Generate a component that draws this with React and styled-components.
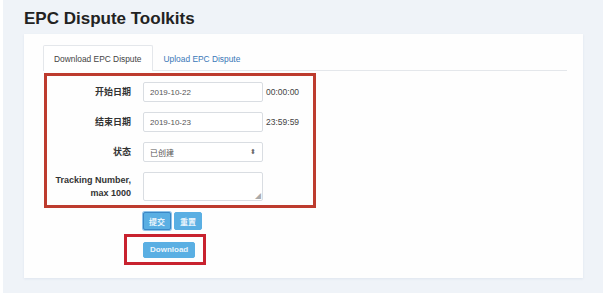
import React from 'react';
import styled, { createGlobalStyle } from 'styled-components';

const Global = createGlobalStyle`
    body {
        margin: 0;
        background: #ffffff;
        font-family: "Liberation Sans", "Noto Sans CJK SC", sans-serif;
    }
`;

const Panel = styled.div`
    margin-left: 3px;
    width: 600px;
    height: 293px;
    background: #eff3f8;
    padding-top: 9px;
    box-sizing: border-box;

    h1 {
        margin: 0 0 0 21px;
        font-size: 17px;
        line-height: 20px;
        font-weight: bold;
        color: #222;
    }
`;

const Card = styled.div`
    margin: 5px 0 0 21px;
    width: 559px;
    height: 244px;
    background: #fefefe;
    box-sizing: border-box;
    padding: 11px 16px 0 19px;
    box-shadow: 0 1px 2px rgba(200, 210, 225, 0.4);
`;

const Tabs = styled.div`
    display: flex;
    height: 25px;
    border-bottom: 1px solid #e4e7eb;
`;

const Tab = styled.div`
    display: flex;
    align-items: center;
    justify-content: center;
    white-space: nowrap;
    padding: 0 10px;
    font-size: 8.4px;
    color: ${p => (p.active ? '#444' : '#3a78b8')};
    background: ${p => (p.active ? '#fff' : 'transparent')};
    border: 1px solid ${p => (p.active ? '#e4e7eb' : 'transparent')};
    border-bottom: none;
    border-radius: 2px 2px 0 0;
    margin-bottom: -1px;
    box-sizing: border-box;
`;

const RedBox = styled.div`
    margin: 2px 0 0 1px;
    width: 272px;
    height: 135px;
    border: 3px solid #bd3b2e;
    box-sizing: border-box;
    padding-top: 6px;
    display: flex;
    flex-direction: column;
    gap: 10px;
`;

const Row = styled.div`
    display: flex;
    align-items: center;
    height: ${p => p.h || 20}px;
`;

const Label = styled.label`
    width: 84px;
    text-align: right;
    font-size: 9px;
    font-weight: bold;
    color: #333;
    line-height: 13px;
    margin-right: 12px;
`;

const Field = styled.div`
    width: 120px;
    height: ${p => p.h || 20}px;
    box-sizing: border-box;
    border: 1px solid #d9dde2;
    border-radius: 2px;
    background: #fff;
    font-size: 8px;
    color: #555;
    padding: 0 6px;
    display: flex;
    align-items: center;
    justify-content: space-between;
    position: relative;
`;

const Arrows = styled.span`
    font-size: 7px;
    color: #666;
`;

const Time = styled.span`
    margin-left: 3px;
    font-size: 8.5px;
    color: #444;
`;

const Grip = styled.span`
    position: absolute;
    right: 1px;
    bottom: 0;
    font-size: 6px;
    color: #aaa;
`;

const Actions = styled.div`
    display: flex;
    gap: 3px;
    margin: 4px 0 0 100px;
`;

const Btn = styled.button`
    height: ${p => p.h || 18}px;
    padding: 0 ${p => p.pad || 5}px;
    font-size: 8px;
    font-weight: bold;
    color: #eaf5fc;
    background: #5aafe3;
    border: 1px solid ${p => (p.focused ? '#3a87c6' : '#5aafe3')};
    border-radius: 2px;
    font-family: "Liberation Sans", "Noto Sans CJK SC", sans-serif;
    box-shadow: ${p => (p.focused ? '0 0 0 1px #8fc4ea' : 'none')};
`;

const DownloadBox = styled.div`
    margin: 4px 0 0 81px;
    width: 82px;
    height: 31px;
    border: 3px solid #c8222f;
    box-sizing: border-box;
    display: flex;
    align-items: center;
    padding-left: 16px;
`;

const App = () => {
    return (
        <>
            <Global />
            <Panel>
                <h1>EPC Dispute Toolkits</h1>
                <Card>
                    <Tabs>
                        <Tab active>Download EPC Dispute</Tab>
                        <Tab>Upload EPC Dispute</Tab>
                    </Tabs>
                    <RedBox>
                        <Row>
                            <Label>开始日期</Label>
                            <Field>2019-10-22</Field>
                            <Time>00:00:00</Time>
                        </Row>
                        <Row>
                            <Label>结束日期</Label>
                            <Field>2019-10-23</Field>
                            <Time>23:59:59</Time>
                        </Row>
                        <Row>
                            <Label>状态</Label>
                            <Field>
                                已创建
                                <Arrows>⬍</Arrows>
                            </Field>
                        </Row>
                        <Row h={29}>
                            <Label>Tracking Number, max 1000</Label>
                            <Field h={29}>
                                <Grip>◢</Grip>
                            </Field>
                        </Row>
                    </RedBox>
                    <Actions>
                        <Btn focused>提交</Btn>
                        <Btn>重置</Btn>
                    </Actions>
                    <DownloadBox>
                        <Btn pad={6} h={16}>Download</Btn>
                    </DownloadBox>
                </Card>
            </Panel>
        </>
    );
};

export default App;
